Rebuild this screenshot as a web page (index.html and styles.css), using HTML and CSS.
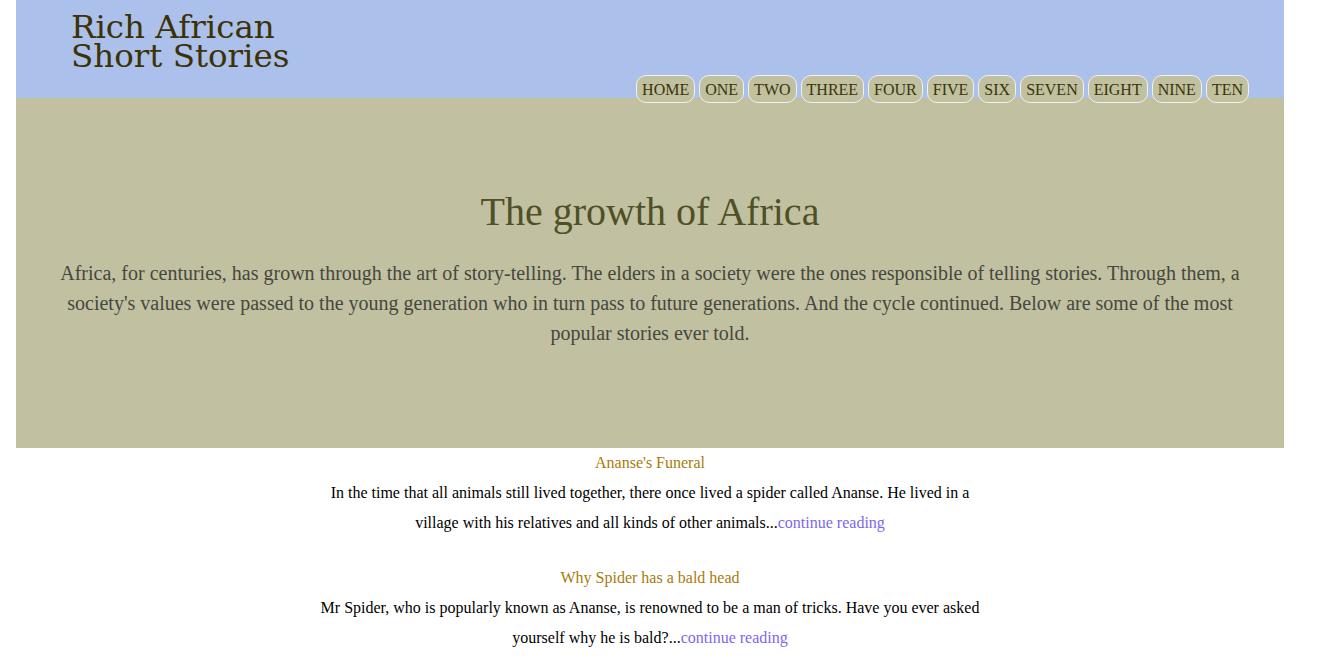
FILE: index.html
```html
<!DOCTYPE html>
<html lang="en">
<head>
<meta charset="utf-8">
<title>Rich African Short Stories</title>
<link rel="stylesheet" href="styles.css">
</head>
<body>
<div class="page">
  <header class="site-header">
    <h1 class="brand">Rich African<br>Short Stories</h1>
    <nav class="nav">
      <a class="nav-btn" href="#">HOME</a>
      <a class="nav-btn" href="#">ONE</a>
      <a class="nav-btn" href="#">TWO</a>
      <a class="nav-btn" href="#">THREE</a>
      <a class="nav-btn" href="#">FOUR</a>
      <a class="nav-btn" href="#">FIVE</a>
      <a class="nav-btn" href="#">SIX</a>
      <a class="nav-btn" href="#">SEVEN</a>
      <a class="nav-btn" href="#">EIGHT</a>
      <a class="nav-btn" href="#">NINE</a>
      <a class="nav-btn" href="#">TEN</a>
    </nav>
  </header>
  <section class="hero">
    <h2 class="hero-title">The growth of Africa</h2>
    <p class="hero-text">Africa, for centuries, has grown through the art of story-telling. The elders in a society were the ones responsible of telling stories. Through them, a society's values were passed to the young generation who in turn pass to future generations. And the cycle continued. Below are some of the most popular stories ever told.</p>
  </section>
  <main class="stories">
    <article class="story">
      <h3 class="story-title">Ananse's Funeral</h3>
      <p class="story-text">In the time that all animals still lived together, there once lived a spider called Ananse. He lived in a village with his relatives and all kinds of other animals...<a class="more" href="#">continue reading</a></p>
    </article>
    <article class="story">
      <h3 class="story-title">Why Spider has a bald head</h3>
      <p class="story-text">Mr Spider, who is popularly known as Ananse, is renowned to be a man of tricks. Have you ever asked yourself why he is bald?...<a class="more" href="#">continue reading</a></p>
    </article>
  </main>
</div>
</body>
</html>
```
FILE: styles.css
```css
html, body {
  margin: 0;
  padding: 0;
  background: #ffffff;
}
body {
  font-family: "Liberation Serif", "Times New Roman", serif;
}
.page {
  margin: 0 34px 0 16px;
  padding-bottom: 260px;
}
.site-header {
  height: 98px;
  background: #abc0ea;
  display: flex;
  justify-content: space-between;
  align-items: flex-start;
  padding: 0 35px 0 55px;
  box-sizing: border-box;
  position: relative;
  z-index: 1;
}
.brand {
  margin: 13px 0 0 0;
  font-family: "DejaVu Serif", serif;
  font-weight: normal;
  font-size: 32.5px;
  line-height: 29px;
  color: #3d3106;
}
.nav {
  align-self: flex-end;
  margin-bottom: -5px;
  display: flex;
  gap: 4px;
}
.nav-btn {
  display: block;
  font-size: 16px;
  line-height: 18px;
  padding: 5px 5px 3px;
  border: 1px solid #f2f2ea;
  border-radius: 10px;
  background: #c1c1a1;
  color: #3a3408;
  text-decoration: none;
}
.hero {
  background: #c1c1a1;
  height: 350px;
  box-sizing: border-box;
  padding: 91px 40px 0;
  text-align: center;
}
.hero-title {
  margin: 0;
  font-weight: normal;
  font-size: 40px;
  line-height: 46px;
  color: #4f5026;
}
.hero-text {
  margin: 23px 0 0;
  font-size: 20px;
  line-height: 30px;
  color: #47473d;
}
.stories {
  display: flex;
  flex-direction: column;
  align-items: center;
  gap: 25px;
}
.story {
  max-width: 672px;
  text-align: center;
}
.story-title {
  margin: 0;
  font-weight: normal;
  font-size: 16px;
  line-height: 30px;
  color: #a77c0a;
}
.story-text {
  margin: 0;
  font-size: 16px;
  line-height: 30px;
  color: #000;
}
.more {
  color: #7b68ee;
  text-decoration: none;
}
```
